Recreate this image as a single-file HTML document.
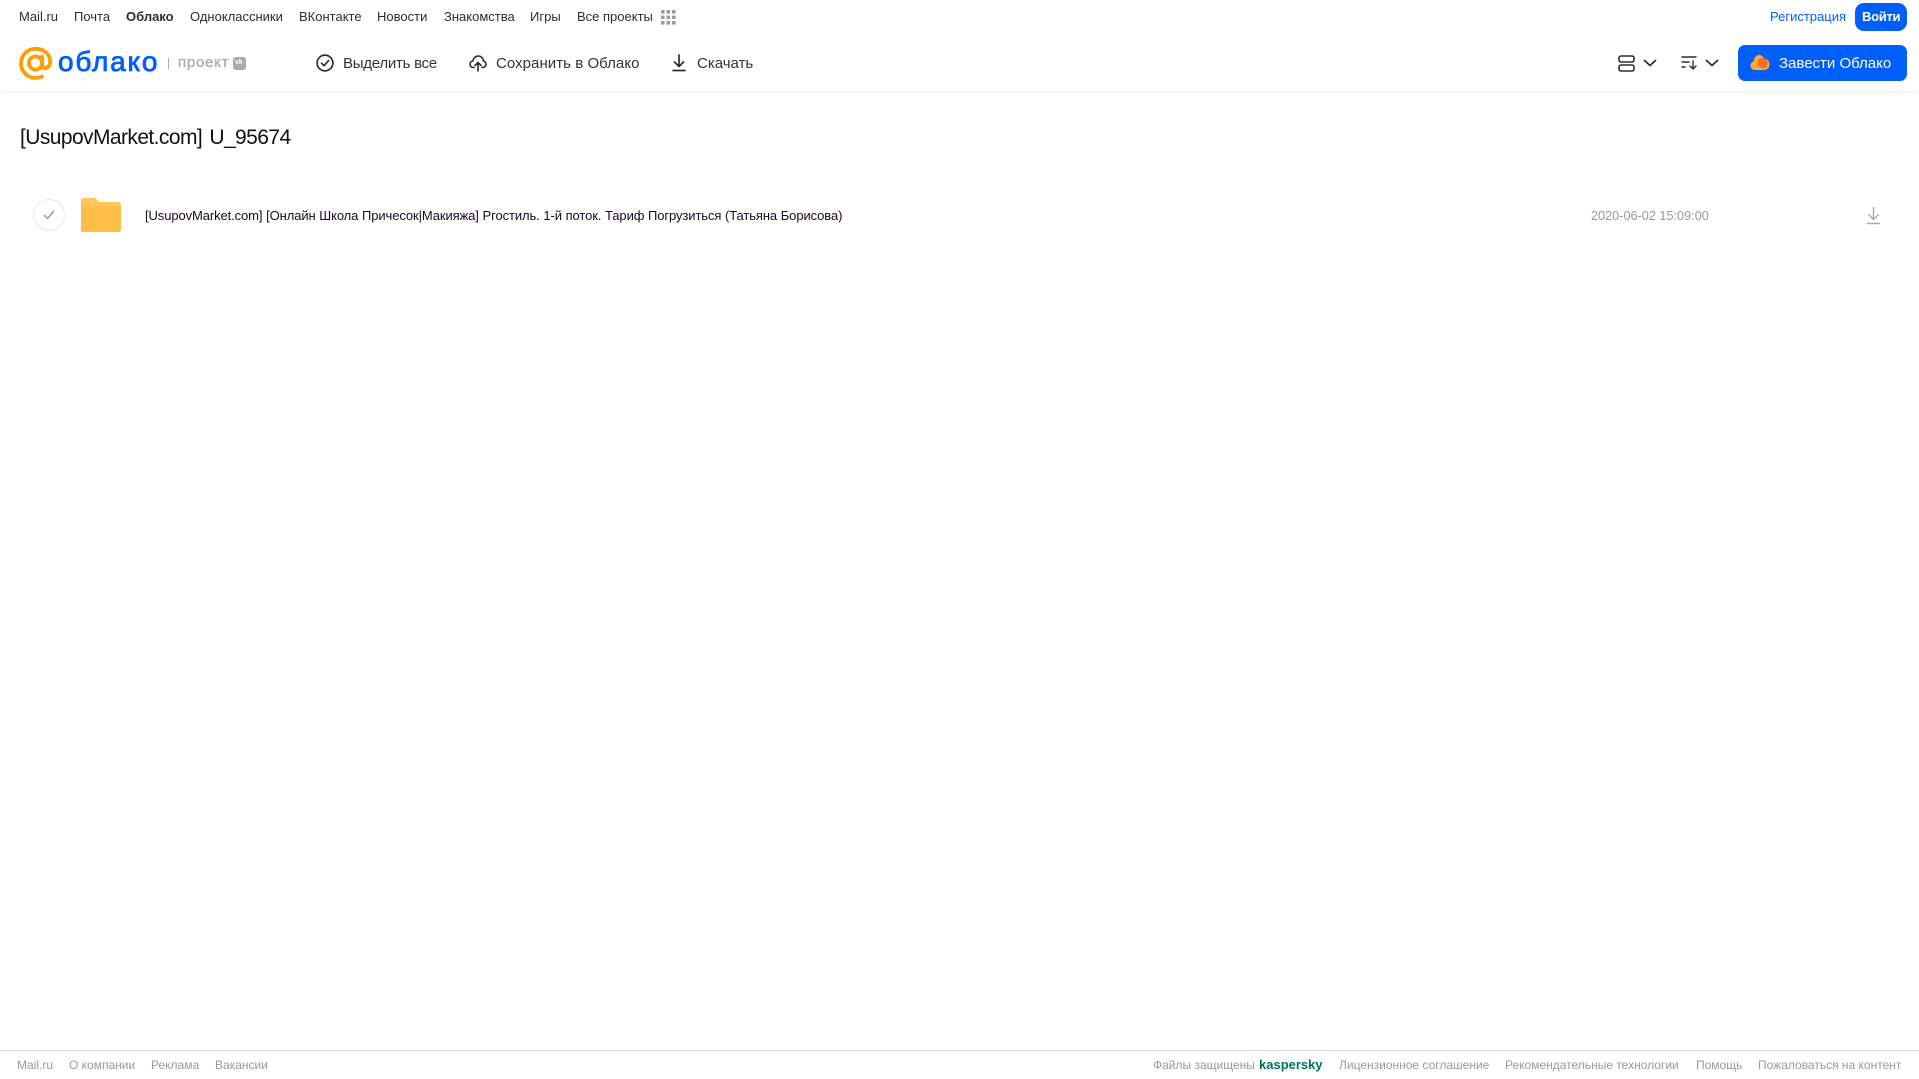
<!DOCTYPE html>
<html lang="ru"><head><meta charset="utf-8"><title>Облако</title>
<style>
html,body{margin:0;padding:0;background:#fff;width:1919px;height:1079px;overflow:hidden}
body{position:relative;font-family:"Liberation Sans",Arial,sans-serif;color:#2c2d2e}
.t{position:absolute;white-space:nowrap;line-height:20px;height:20px}
.n{font-size:13px;top:7px;color:#2c2d2e}
.tb{font-size:15px;top:54px;color:#333}
.f{font-size:12px;top:1055px;color:#999}
svg{position:absolute;display:block}
#hdr{position:absolute;left:0;top:0;width:1919px;height:91px;background:#fff;box-shadow:0 1px 6px rgba(0,0,0,.07)}
#ft{position:absolute;left:0;top:1050px;width:1919px;height:1px;background:#d8d8d8}
</style></head><body>
<div id="hdr"></div>
<span class="t n" style="left:19px">Mail.ru</span>
<span class="t n" style="left:74px">Почта</span>
<span class="t n" style="left:126px;font-weight:bold">Облако</span>
<span class="t n" style="left:190px">Одноклассники</span>
<span class="t n" style="left:299px">ВКонтакте</span>
<span class="t n" style="left:377px">Новости</span>
<span class="t n" style="left:444px">Знакомства</span>
<span class="t n" style="left:530px">Игры</span>
<span class="t n" style="left:577px">Все проекты</span>
<svg style="left:661px;top:10px" width="15" height="15" viewBox="0 0 15 15" fill="#9a9a9a"><rect x="0" y="0" width="3.6" height="3.6" rx=".8"/><rect x="5.5" y="0" width="3.6" height="3.6" rx=".8"/><rect x="11" y="0" width="3.6" height="3.6" rx=".8"/><rect x="0" y="5.5" width="3.6" height="3.6" rx=".8"/><rect x="5.5" y="5.5" width="3.6" height="3.6" rx=".8"/><rect x="11" y="5.5" width="3.6" height="3.6" rx=".8"/><rect x="0" y="11" width="3.6" height="3.6" rx=".8"/><rect x="5.5" y="11" width="3.6" height="3.6" rx=".8"/><rect x="11" y="11" width="3.6" height="3.6" rx=".8"/></svg>
<span class="t n" style="left:1770px;color:#005ff9">Регистрация</span>
<div style="position:absolute;left:1855px;top:3px;width:52px;height:28px;border-radius:9px;background:#005ff9"></div>
<span class="t n" style="left:1862px;color:#fff;font-weight:bold;letter-spacing:-.3px">Войти</span>

<svg style="left:18px;top:47px" width="35" height="33" viewBox="0 0 35 33" fill="none" stroke="#ff9e00" stroke-width="3.8"><circle cx="17.5" cy="16" r="6.6"/><path d="M24.1 9.5V17.5c0 5 6.9 5 7.9-1.500 1.100-8-5.500-14.200-14.500-14.200C9.500 1.800 3 8.200 3 16.300 3 24.500 9.500 31 17.500 31c2.500 0 4.500-.4 6.500-1.500" stroke-linecap="round"/></svg>
<span class="t" style="left:58px;top:46px;height:32px;line-height:32px;font-size:28px;color:#005ff9;letter-spacing:1.8px;-webkit-text-stroke:.8px #005ff9">облако</span>
<div style="position:absolute;left:168px;top:58px;width:1px;height:11px;background:#aaa"></div>
<span class="t" style="left:178px;top:53px;font-size:15px;color:#aaa;letter-spacing:.75px;-webkit-text-stroke:.3px #aaa">проект</span>
<div style="position:absolute;left:233px;top:57px;width:13px;height:13px;border-radius:3px;background:#aaa"></div>
<span class="t" style="left:235px;top:53px;font-size:7px;font-weight:bold;color:#fff">vk</span>

<svg style="left:316px;top:54px" width="18" height="18" viewBox="0 0 18 18" fill="none" stroke="#2c2d2e" stroke-width="1.7"><circle cx="9" cy="9" r="7.9"/><path d="M5.500 9.200l2.500 2.500 4.500-5" stroke-linecap="round" stroke-linejoin="round"/></svg>
<span class="t tb" style="left:343px;letter-spacing:-.25px">Выделить все</span>
<svg style="left:469px;top:54px" width="18" height="18" viewBox="0 0 18 18" fill="none" stroke="#2c2d2e" stroke-width="1.6" stroke-linecap="round" stroke-linejoin="round"><path d="M5 13.500H4.300C2.400 13.500 1 12 1 10.200c0-1.700 1.200-3 2.800-3.200C4.300 4.300 6.500 2 9.200 2c2.900 0 5 2.200 5.200 5 1.500.2 2.600 1.500 2.600 3.100 0 1.800-1.400 3.400-3.300 3.400H13"/><path d="M9 17V9M6 11.500l3-3 3 3"/></svg>
<span class="t tb" style="left:496px;letter-spacing:.05px">Сохранить в Облако</span>
<svg style="left:671px;top:54px" width="16" height="18" viewBox="0 0 16 18" fill="none" stroke="#2c2d2e" stroke-width="1.7" stroke-linecap="round" stroke-linejoin="round"><path d="M8 1v11M3.500 8l4.500 4.500L12.500 8M2 16.500h12"/></svg>
<span class="t tb" style="left:697px">Скачать</span>

<svg style="left:1618px;top:55px" width="17" height="17" viewBox="0 0 17 17" fill="none" stroke="#2c2d2e" stroke-width="1.6"><rect x="1" y="1" width="15" height="6" rx="2"/><rect x="1" y="10" width="15" height="6" rx="2"/></svg>
<svg style="left:1643px;top:59px" width="14" height="8" viewBox="0 0 14 8" fill="none" stroke="#2c2d2e" stroke-width="1.8" stroke-linecap="round" stroke-linejoin="round"><path d="M1.500 1.500L7 6.500l5.500-5"/></svg>
<svg style="left:1681px;top:55px" width="17" height="16" viewBox="0 0 17 16" fill="none" stroke="#2c2d2e" stroke-width="1.4" stroke-linecap="round" stroke-linejoin="round"><path d="M1 2h14M1 7h7M1 12h3M12 6v8M9 11l3 3 3-3"/></svg>
<svg style="left:1705px;top:59px" width="14" height="8" viewBox="0 0 14 8" fill="none" stroke="#2c2d2e" stroke-width="1.8" stroke-linecap="round" stroke-linejoin="round"><path d="M1.500 1.500L7 6.500l5.500-5"/></svg>
<div style="position:absolute;left:1738px;top:45px;width:169px;height:36px;border-radius:7px;background:#005ff9"></div>
<svg style="left:1750px;top:54px" width="20" height="17" viewBox="0 0 20 17"><path d="M5 16C2.200 16 .5 14 .5 11.500.5 9.500 2 8 3.500 7.500 4 4 6 1 9 1c2.500 0 4 1.500 5 3.500 3 0 5.500 2.500 5.500 5.700 0 3.200-2.500 5.800-5.500 5.800z" fill="#ffa930"/><circle cx="12.500" cy="9" r="5.200" fill="#f4702a"/></svg>
<span class="t tb" style="left:1779px;color:#fff">Завести Облако</span>

<span class="t" style="left:20px;top:126px;height:24px;line-height:24px;font-size:21px;letter-spacing:-.58px;word-spacing:2px;color:#111">[UsupovMarket.com] U_95674</span>

<div style="position:absolute;left:33px;top:199px;width:30px;height:30px;border:1px solid #e8e8e8;border-radius:50%"></div>
<svg style="left:43px;top:210px" width="12" height="10" viewBox="0 0 12 10" fill="none" stroke="#9a9a9a" stroke-width="1.5" stroke-linecap="round" stroke-linejoin="round"><path d="M1.500 5.500L4.500 8.500 10.500 1.500"/></svg>
<svg style="left:81px;top:198px" width="40" height="34" viewBox="0 0 40 34"><path d="M2 0h11c2 0 3 1 4 2.500.6 1 1.200 1.500 2.500 1.500H38c1.200 0 2 .8 2 2v26c0 1.200-.8 2-2 2H2c-1.200 0-2-.8-2-2V2C0 .8.800 0 2 0z" fill="#ffc65c"/><path d="M0 8.500h40V32c0 1.200-.8 2-2 2H2c-1.200 0-2-.8-2-2z" fill="#ffbe45"/></svg>
<span class="t" style="left:145px;top:206px;font-size:13px;letter-spacing:-.1px;word-spacing:.2px;color:#1a0a1f">[UsupovMarket.com] [Онлайн Школа Причесок|Макияжа] Ргостиль. 1-й поток. Тариф Погрузиться (Татьяна Борисова)</span>
<span class="t" style="left:1591px;top:206px;font-size:12.7px;color:#999">2020-06-02 15:09:00</span>
<svg style="left:1866px;top:206px" width="15" height="19" viewBox="0 0 15 19" fill="none" stroke="#aaa" stroke-width="1.4"><path d="M7.500 1v12M2.500 8.500l5 5 5-5M1 17.500h13"/></svg>

<div id="ft"></div>
<span class="t f" style="left:17px">Mail.ru</span>
<span class="t f" style="left:69px">О компании</span>
<span class="t f" style="left:151px">Реклама</span>
<span class="t f" style="left:215px">Вакансии</span>
<span class="t f" style="left:1153px">Файлы защищены</span>
<span class="t" style="left:1259px;top:1055px;font-size:13px;font-weight:bold;color:#00735c">kaspersky</span>
<span class="t f" style="left:1339px">Лицензионное соглашение</span>
<span class="t f" style="left:1505px">Рекомендательные технологии</span>
<span class="t f" style="left:1696px">Помощь</span>
<span class="t f" style="left:1758px">Пожаловаться на контент</span>
</body></html>
